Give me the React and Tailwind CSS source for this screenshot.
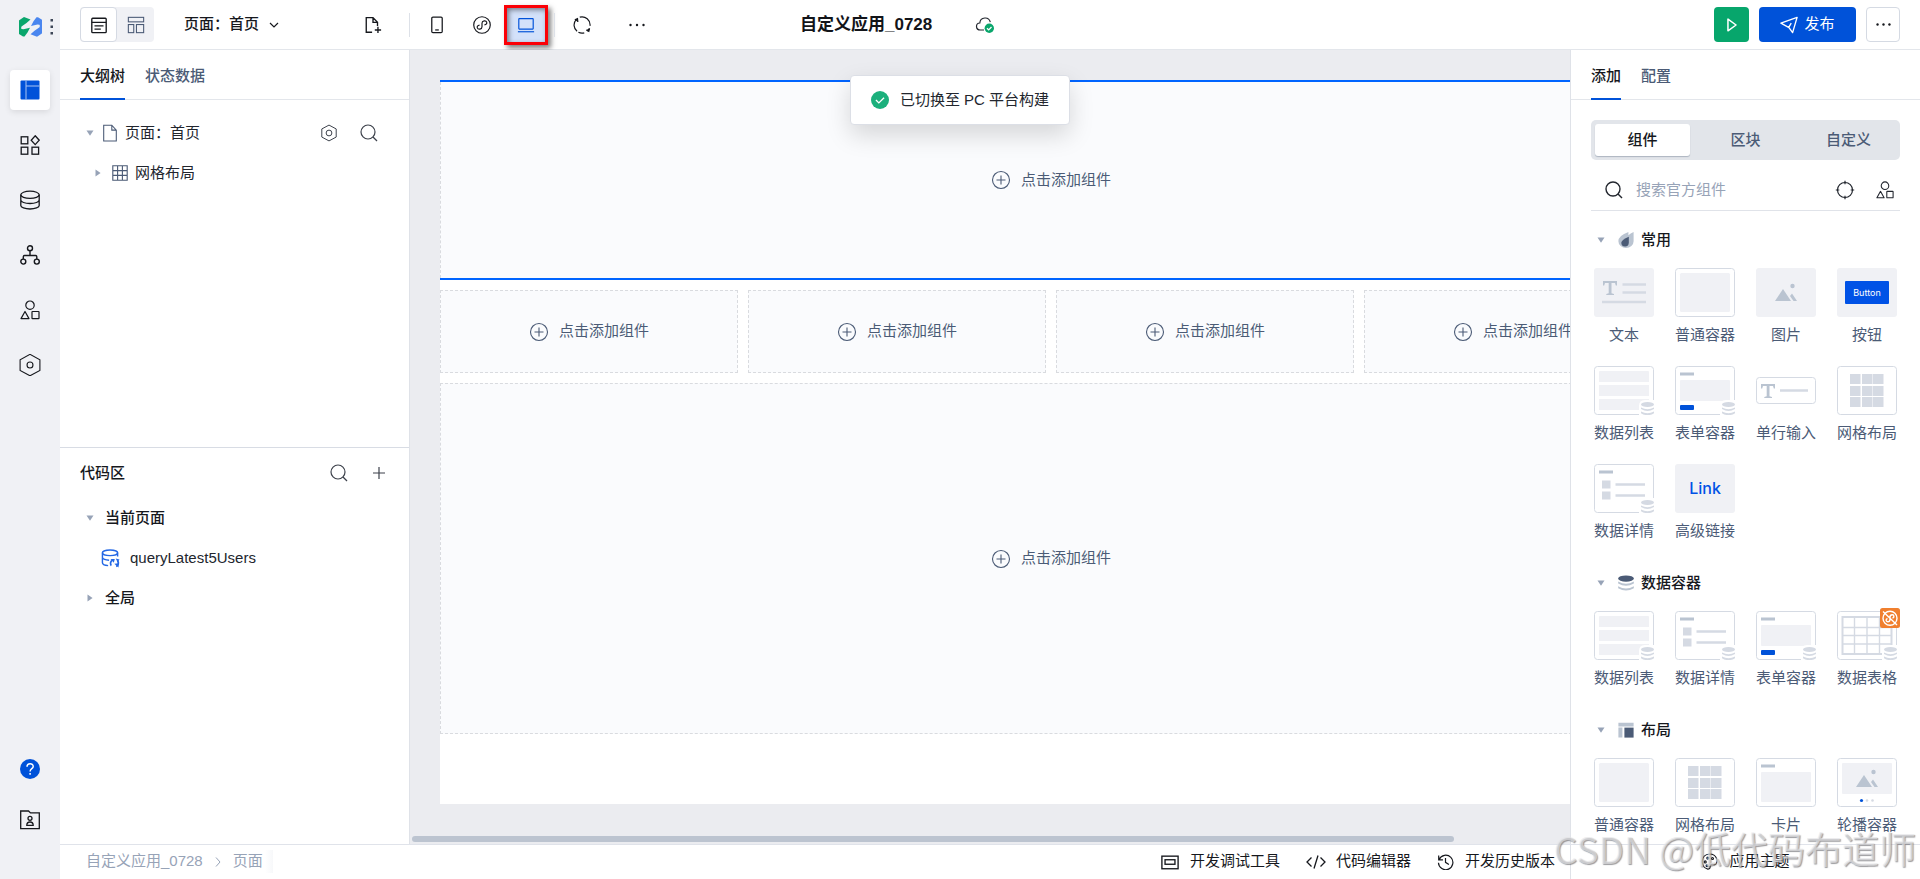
import React from 'react';

function Icon({ size = 'size-5', sw = 1.2, children, className = '' }) {
  return (
    <svg viewBox="0 0 20 20" className={`${size} shrink-0 ${className}`} fill="none" stroke="currentColor" strokeWidth={sw} aria-hidden="true">
      {children}
    </svg>
  );
}

const SearchIcon = ({ sw = 1.2 }) => (
  <Icon sw={sw}>
    <circle cx="9" cy="9" r="7" />
    <path d="M14 14l4 4" />
  </Icon>
);

const PlusCircle = () => (
  <Icon sw={1.1}>
    <circle cx="10" cy="10" r="8.5" />
    <path d="M10 5.5v9M5.5 10h9" />
  </Icon>
);

const Dots = () => (
  <Icon>
    <g fill="currentColor" stroke="none">
      <circle cx="3.5" cy="10" r="1.2" />
      <circle cx="10" cy="10" r="1.2" />
      <circle cx="16.5" cy="10" r="1.2" />
    </g>
  </Icon>
);

const ShapesIcon = ({ size }) => (
  <Icon size={size}>
    <circle cx="10" cy="5.2" r="4.2" />
    <path d="M5 11.5L1 18.6h8z" strokeLinejoin="round" />
    <rect x="12" y="11.5" width="7" height="7.2" rx=".5" />
  </Icon>
);

const DownCaret = () => (
  <svg viewBox="0 0 8 6" className="h-[6px] w-2 shrink-0" aria-hidden="true">
    <path d="M.5 .5h7L4 5.8z" fill="#97a3b7" />
  </svg>
);
const RightCaret = () => (
  <svg viewBox="0 0 6 8" className="mx-px h-2 w-[6px] shrink-0" aria-hidden="true">
    <path d="M.5 .5v7L5.6 4z" fill="#97a3b7" />
  </svg>
);

const HexIcon = ({ size }) => (
  <Icon size={size} sw={1.1}>
    <path d="M10 1.2l8 4.3v9l-8 4.3-8-4.3v-9z" />
    <circle cx="10" cy="10" r="3.2" />
  </Icon>
);

const SIDE = [
  ['组件', <Icon key="a" sw={1.3}><rect x="1.2" y="1.8" width="6.6" height="7" /><rect x="1.2" y="12.2" width="6.6" height="7" /><rect x="12" y="12.2" width="6.6" height="7" /><path d="M15.2 .8l4 4.4-4 4.4-4-4.4z" /></Icon>],
  ['数据', <Icon key="b" sw={1.3}><ellipse cx="10" cy="4.8" rx="9.2" ry="3.6" /><path d="M.8 4.8v10.6c0 2 4.100 3.600 9.200 3.600s9.200-1.600 9.200-3.600V4.800M.8 10c0 2 4.100 3.500 9.200 3.500s9.200-1.500 9.200-3.500" /></Icon>],
  ['流程', <Icon key="c" sw={1.4}><circle cx="10" cy="3.200" r="2.500" /><circle cx="3.300" cy="16.600" r="2.500" /><circle cx="16.800" cy="16.600" r="2.500" /><path d="M10 5.700v4.800M3.300 14v-2.200q0-1.300 1.300-1.300h10.900q1.300 0 1.300 1.300V14" /></Icon>],
  ['素材', <ShapesIcon key="d" />],
  ['设置', <Icon key="e" size="size-[22px]" sw={1}><path d="M10 .3l9 4.900v9.800l-9 4.800-9-4.800V5.200z" /><circle cx="10" cy="10" r="2.700" /></Icon>],
];

function Sidebar() {
  return (
    <nav className="flex w-[60px] shrink-0 flex-col items-center bg-[#f0f1f5] text-[#16181d]">
      <div className="flex h-[54px] items-center pl-[14px]">
        <svg viewBox="0 0 36 20" className="h-5 w-9" aria-label="logo" role="img">
          <path d="M.5 3L5 0l6.500 2.500L7.500 6 2.500 9.500q-.8 1.500 0 2.500l2 .3 6.500-1.500L8.500 15.500 5.500 19.500H4L0 17V3.500z" fill="#0aa66c" />
          <path d="M22.500 16.800L18 19.800l-6.500-2.500 4-3.500 5-3.500q.8-1.500 0-2.500l-2-.3L12 9l2.500-4.700L17.500.3H19L23 2.800v13.500z" fill="#4a86ef" />
          <g fill="#3d4757"><rect x="31.500" y="2" width="2.500" height="2.500" /><rect x="31.500" y="8.500" width="2.500" height="2.500" /><rect x="31.500" y="15" width="2.500" height="2.500" /></g>
        </svg>
      </div>
      <div className="flex flex-col gap-[15px] pt-4">
        <button aria-label="页面" className="grid size-10 place-items-center rounded bg-white shadow-[0_2px_6px_rgba(0,0,0,0.1)]">
          <svg viewBox="0 0 20 20" className="size-5" aria-hidden="true">
            <rect x=".5" y=".5" width="19" height="19" rx="1" fill="#0052d9" />
            <path d="M6 .5v19M6 6h13.500" stroke="#a9c4f3" />
          </svg>
        </button>
        {SIDE.map(([label, icon]) => (
          <button key={label} aria-label={label} className="grid size-10 place-items-center">{icon}</button>
        ))}
      </div>
      <div className="mt-auto flex flex-col gap-[11px] pb-[39px]">
        <button aria-label="帮助" className="grid size-10 place-items-center">
          <Icon sw={1.5}>
            <circle cx="10" cy="10" r="10" fill="#0052d9" stroke="none" />
            <path d="M7 7.800c0-4 6.200-4 6.200-.4 0 2.200-3.100 2.400-3.100 5M10.100 14v1.800" stroke="#fff" />
          </Icon>
        </button>
        <button aria-label="资源" className="grid size-10 place-items-center">
          <Icon sw={1.3}>
            <path d="M.7 1h7.800l2 1.900h8.800v15.800H.7z" />
            <circle cx="10" cy="8.300" r="2" />
            <path d="M6.800 15.300c0-4.400 6.400-4.400 6.400 0z" />
          </Icon>
        </button>
      </div>
    </nav>
  );
}

function Header() {
  return (
    <header className="flex h-[50px] shrink-0 items-center border-b border-[#e3e6eb] bg-white pl-5 pr-5">
      <div className="flex h-[35px] rounded bg-[#f0f1f5]">
        <button aria-label="大纲视图" className="grid w-[37px] place-items-center rounded border border-[#d5dae3] bg-white">
          <Icon size="size-[18px]" sw={1.500}><rect x="2" y="2.500" width="16" height="16" rx="1" /><path d="M2 7h16M5 11h10M5 14.500h7" /></Icon>
        </button>
        <button aria-label="布局视图" className="grid w-[37px] place-items-center text-[#4b5b76]">
          <Icon size="size-[18px]" sw={1.200}><rect x="1.500" y="1.500" width="17" height="5" /><rect x="1.500" y="9.500" width="6" height="9" /><rect x="10.500" y="9.500" width="8" height="9" /></Icon>
        </button>
      </div>
      <button className="ml-[30px] flex w-[180px] items-center gap-[10px] text-[15px] font-medium">
        页面：首页
        <Icon size="size-[10px]" sw={2.400}><path d="M2 6l8 8 8-8" /></Icon>
      </button>
      <button aria-label="新建页面" className="grid h-9 w-[18px] place-items-center">
        <Icon size="size-[18px]" sw={1.500}>
          <path d="M9 18H2.500V1.800H10l5 5.200v4M10 1.800V7h5M15.500 12v7M12 15.500h7" />
        </Icon>
      </button>
      <span className="ml-[27px] h-6 w-px bg-[#dde1e8]" />
      <button aria-label="移动端" className="ml-[17px] grid size-5 place-items-center">
        <Icon size="size-[18px]" sw={1.400}><rect x="4.200" y="1.200" width="11.600" height="17.400" rx="1.300" /><path d="M8 15.500h4" /></Icon>
      </button>
      <button aria-label="小程序" className="ml-[25px] grid size-5 place-items-center">
        <Icon size="size-[18px]" sw={1.300}>
          <circle cx="10" cy="10" r="9.200" />
          <path d="M7.300 10.200c-2.200.3-3 1.700-2.500 3 .7 2.100 5.200 2 5.200-1.200V8c0-3.200 4.500-3.300 5.200-1.200.5 1.300-.3 2.700-2.500 3" />
        </Icon>
      </button>
      <button aria-label="PC 端" className="ml-3 grid h-10 w-11 place-items-center border-3 border-[#fb0006] bg-[#d3e1fa] text-[#0052d9] shadow-[3px_3px_5px_rgba(0,0,0,0.5),inset_2px_2px_5px_rgba(0,0,0,0.45)]">
        <Icon size="size-[18px]" sw={1.300}><rect x="2" y="3" width="16" height="11.500" rx=".5" /><path d="M1 17.500h18" /></Icon>
      </button>
      <span className="ml-[6px] h-6 w-px bg-[#dde1e8]" />
      <button aria-label="刷新" className="ml-[17px] grid size-5 place-items-center">
        <Icon size="size-[18px]" sw={1.300}>
          <path d="M4.500 17A9 9 0 0 1 3.500 4M7.500 1.300A9 9 0 0 1 18.900 11M12.500 18.700A9 9 0 0 1 6 18.100M18 14A9 9 0 0 1 16 16.700" />
          <path d="M2 4.200l3-1.200.4 3.600M18.400 13.800l-.8 3.300-2.800-1.600" fill="currentColor" />
        </Icon>
      </button>
      <button aria-label="更多" className="ml-[35px]"><Dots /></button>
      <h1 className="ml-[153px] text-[17px] font-bold text-[#121419]">自定义应用_0728</h1>
      <svg viewBox="0 0 20 18" className="ml-[43px] h-[18px] w-5" fill="none" aria-label="已保存" role="img">
        <path d="M9 14H5.500C.3 14 .3 7.300 4.800 7 5.300.8 14 .2 15.300 6.200" stroke="#22262e" strokeWidth="1.200" />
        <circle cx="14.300" cy="12.300" r="4.700" fill="#0aa66c" />
        <path d="M12 12.300l1.700 1.600 2.800-2.900" stroke="#fff" strokeWidth="1.300" />
      </svg>
      <div className="ml-auto flex h-[35px] gap-[10px]">
        <button aria-label="运行" className="grid w-[35px] place-items-center rounded bg-[#07a66c] text-white">
          <Icon size="size-[18px]" sw={1.700}><path d="M5.500 3.500v13l9-6.500z" strokeLinejoin="round" /></Icon>
        </button>
        <button className="flex w-[97px] items-center justify-center gap-[6px] rounded bg-[#0052d9] text-[15px] text-white">
          <Icon size="size-[18px]" sw={1.500}><path d="M1 8l18-6.500-5 17-4-5.500zM9.500 13l3-5" strokeLinejoin="round" /></Icon>
          发布
        </button>
        <button aria-label="更多操作" className="grid w-[34px] place-items-center rounded border border-[#d5dae3]"><Icon size="size-[17px]"><g fill="currentColor" stroke="none"><circle cx="3" cy="10" r="1.400" /><circle cx="10" cy="10" r="1.400" /><circle cx="17" cy="10" r="1.400" /></g></Icon></button>
      </div>
    </header>
  );
}

function Tabs({ items }) {
  return (
    <div className="flex h-[50px] shrink-0 gap-5 border-b border-[#e3e6eb] pl-5 text-[15px] font-medium">
      {items.map((t, i) => (
        <button key={t} className={i === 0 ? '-mb-px border-b-2 border-[#0052d9] pt-1 text-[#16181d]' : '-mb-px border-b-2 border-transparent pt-1 text-[#4b5b76]'}>{t}</button>
      ))}
    </div>
  );
}

function LeftPanel() {
  return (
    <aside className="flex w-[350px] shrink-0 flex-col border-r border-[#dfe2e8] bg-white text-[15px] text-[#22262e]">
      <Tabs items={['大纲树', '状态数据']} />
      <div className="flex h-[347px] flex-col pt-[13px]">
        <div className="flex h-10 items-center pl-[26px] pr-[30px]">
          <DownCaret />
          <Icon size="size-[18px]" className="ml-[7px] text-[#4b5b76]"><path d="M3 1.300h9l5 5.500v12H3zM12 1.300v5.500h5" /></Icon>
          <span className="ml-[6px]">页面：首页</span>
          <button aria-label="页面设置" className="ml-auto grid size-5 place-items-center text-[#3c414b]"><HexIcon size="size-[18px]" /></button>
          <button aria-label="搜索大纲" className="ml-5 text-[#3c414b]"><SearchIcon /></button>
        </div>
        <div className="flex h-10 items-center pl-[34px]">
          <RightCaret />
          <Icon size="size-4" sw={1.400} className="ml-[10px] text-[#4b5b76]"><path d="M1 1h18v18H1zM7 1v18M13 1v18M1 7h18M1 13h18" /></Icon>
          <span className="ml-[7px]">网格布局</span>
        </div>
      </div>
      <section className="border-t border-[#d8dce4]">
        <div className="flex h-[50px] items-center pl-5 pr-5">
          <h2 className="font-medium text-[#16181d]">代码区</h2>
          <button aria-label="搜索代码" className="ml-auto text-[#3c414b]"><SearchIcon /></button>
          <button aria-label="新增代码" className="ml-5 text-[#3c414b]"><Icon><path d="M10 4v12M4 10h12" /></Icon></button>
        </div>
        <div className="flex h-10 items-center gap-[11px] pl-[26px] font-medium text-[#16181d]"><DownCaret />当前页面</div>
        <div className="flex h-10 items-center gap-[10px] pl-[41px]">
          <Icon size="size-[19px]" sw={1.500} className="text-[#2468e5]">
            <ellipse cx="9.500" cy="4" rx="8" ry="3" />
            <path d="M1.500 4v10.500q0 2.500 6 3M17.500 4v4M1.500 9q1 2.600 7 2.800" />
            <path d="M10.800 17.500a4 4 0 0 1 1.500-6M17.500 12.500a4 4 0 0 1-1.500 6" strokeWidth="1.800" />
            <path d="M10 10.500h4.500l-1 4zM14 15.500l4.500-.5v4.500zM15.500 10l4 1-2 3z" fill="currentColor" stroke="none" />
          </Icon>
          <span>queryLatest5Users</span>
        </div>
        <div className="flex h-10 items-center gap-[11px] pl-[26px] font-medium text-[#16181d]"><RightCaret />全局</div>
      </section>
    </aside>
  );
}

const AddSlot = ({ className }) => (
  <button className={`flex items-center justify-center gap-[10px] border-dashed border-[#d9dbdf] bg-[#fafbfd] text-[15px] text-[#4b5b76] ${className}`}>
    <PlusCircle />
    点击添加组件
  </button>
);

function Canvas() {
  return (
    <main className="flex min-w-0 flex-1 flex-col bg-[#ebecf0]">
      <div className="flex min-h-0 flex-1 overflow-hidden pb-8 pl-[30px] pt-[30px]">
        <div className="flex w-[1222px] shrink-0 flex-col gap-[10px] bg-white pb-[70px]">
          <div className="flex h-[200px] shrink-0 flex-col border-y-2 border-[#0064ff]">
            <AddSlot className="flex-1 border-x" />
          </div>
          <div className="grid h-[83px] shrink-0 grid-cols-4 gap-[10px]">
            {[0, 1, 2, 3].map((n) => <AddSlot key={n} className="border" />)}
          </div>
          <AddSlot className="min-h-[120px] flex-1 border" />
        </div>
      </div>
      <div className="h-2 shrink-0 pl-[2px]">
        <div className="h-[6px] w-[90%] rounded-full bg-[#bcc4d0]" />
      </div>
    </main>
  );
}

const LINE = '#d5dae3';
const SOFT = '#f0f1f5';
const MID = '#bac4d1';

const Frame = () => <rect x=".5" y=".5" width="59" height="48" rx="3" fill="#fff" stroke={LINE} />;
const Stack = () => (
  <g>
    <path d="M45 50V40q0-6 6-6h9v16z" fill="#fff" />
    <ellipse cx="53.500" cy="38.500" rx="6.500" ry="2.500" fill={LINE} />
    <path d="M47 41.500q6.500 3.500 13 0v1.500q-6.500 4-13 0zM47 45.500q6.500 3.500 13 0v1.700q-6.500 4-13 0z" fill={LINE} />
  </g>
);
const Mountain = ({ x = 0, y = 0 }) => (
  <g transform={`translate(${x} ${y})`} fill={MID}>
    <path d="M19 33l8-12 8 12z" />
    <path d="M34 28l2-2.500L41 33h-3.500z" />
    <circle cx="36.500" cy="18" r="2.200" />
  </g>
);
const Grid9 = () => (
  <g fill={LINE}>
    {[13, 25, 36].map((x) => [8, 20, 31].map((y) => <rect key={`${x}-${y}`} x={x} y={y} width="10.500" height="10" />))}
  </g>
);
const SerifT = ({ x, y }) => (
  <path transform={`translate(${x} ${y})`} d="M0 0h14v4.500h-1.200l-.8-2.500H8.500v10.300l2.500.7v1H3.300v-1l2.400-.7V2H2L1.200 4.500H0z" fill={MID} />
);

const THUMBS = {
  text: <><rect width="60" height="49" rx="3" fill={SOFT} /><SerifT x={9} y={13} /><path d="M28.500 16.500h23.500M28.500 24.500h23.500M8 34h44" stroke={LINE} strokeWidth="2.500" /></>,
  box: <><Frame /><rect x="5" y="5" width="50" height="39" rx="1.500" fill={SOFT} /></>,
  image: <><rect width="60" height="49" rx="3" fill={SOFT} /><Mountain /></>,
  button: <><rect width="60" height="49" rx="3" fill={SOFT} /><rect x="8" y="13" width="44" height="23" rx="1" fill="#0052e6" /><text x="30" y="28" textAnchor="middle" fill="#fff" className="font-['Inter',sans-serif] text-[9px]">Button</text></>,
  list: <><Frame /><path d="M6 5h48q1 0 1 1v10H5V6q0-1 1-1zM5 19h50v11H5zM5 33h50v11H5z" fill={SOFT} /><Stack /></>,
  form: <><Frame /><rect x="5" y="6.500" width="14" height="3" fill={MID} /><rect x="5" y="14" width="50" height="21" rx="1" fill={SOFT} /><rect x="5" y="39" width="14" height="5" rx="1" fill="#0052d9" /><Stack /></>,
  input: <><rect x=".5" y="11.500" width="59" height="26" rx="3" fill="#fff" stroke={LINE} /><SerifT x={5} y={18} /><path d="M24 24.500h28" stroke={LINE} strokeWidth="2.500" /></>,
  grid: <><Frame /><Grid9 /></>,
  detail: <><Frame /><rect x="5" y="6.500" width="14" height="3" fill={MID} /><path d="M8 16.500h8.500v8H8zM8 27.500h8.500v8H8z" fill={LINE} /><path d="M21.500 20.500h29.500M21.500 31.500h29.500" stroke={LINE} strokeWidth="2.500" /><Stack /></>,
  link: <><rect width="60" height="49" rx="3" fill={SOFT} /><text x="30" y="30" textAnchor="middle" fill="#0052e6" className="font-['Inter',sans-serif] text-[16px] font-medium">Link</text></>,
  table: <><Frame /><path d="M5.500 6h49v37h-49z" fill="#fff" stroke={LINE} strokeWidth="2" /><path d="M5.500 16.500h49M5.500 24.500h49M5.500 33h49M17.500 6v37M30 6v37M42.500 6v37" stroke={LINE} strokeWidth="1.400" /><Stack /></>,
  card: <><Frame /><rect x="5" y="6.500" width="14" height="3" fill={MID} /><rect x="5" y="14" width="50" height="30" rx="1" fill={SOFT} /></>,
  carousel: <><Frame /><rect x="5" y="5" width="50" height="31" rx="1" fill={SOFT} /><Mountain y={-4} /><circle cx="24.500" cy="42.500" r="1.600" fill="#0052d9" /><circle cx="30" cy="42.500" r="1.300" fill={LINE} /><circle cx="35.500" cy="42.500" r="1.300" fill={LINE} /></>,
};

const SECTIONS = [
  {
    title: '常用',
    icon: <><path d="M19.500 0v11.500a9.500 8.500 0 0 1-19 0Q.5 4.500 13 0v4Q15.500 1.500 19.500 0z" fill={MID} /><path d="M13.500 6v7.500a4.700 4.500 0 0 1-9.400 0Q4.500 9.500 13.500 6z" fill="#4b5b76" /></>,
    items: [['文本', 'text'], ['普通容器', 'box'], ['图片', 'image'], ['按钮', 'button'], ['数据列表', 'list'], ['表单容器', 'form'], ['单行输入', 'input'], ['网格布局', 'grid'], ['数据详情', 'detail'], ['高级链接', 'link']],
  },
  {
    title: '数据容器',
    icon: <><ellipse cx="10" cy="4.500" rx="9.800" ry="4" fill="#4b5b76" /><path d="M.2 8q9.800 6 19.600 0v2.500q-9.800 6-19.600 0zM.2 14q9.800 6 19.600 0v2.500q-9.800 6-19.600 0z" fill={MID} /></>,
    items: [['数据列表', 'list'], ['数据详情', 'detail'], ['表单容器', 'form'], ['数据表格', 'table', true]],
  },
  {
    title: '布局',
    icon: <><path d="M.5 1h19v4.500H.5zM.5 7h5v12.500h-5z" fill={MID} /><path d="M8 7h11.500v12.500H8z" fill="#4b5b76" /></>,
    items: [['普通容器', 'box'], ['网格布局', 'grid'], ['卡片', 'card'], ['轮播容器', 'carousel']],
  },
];

function Tile({ label, kind, flagged }) {
  return (
    <button className="relative flex w-[60px] flex-col items-center gap-2">
      <svg viewBox="0 0 60 49" className="h-[49px] w-[60px]" fill="none" aria-hidden="true">{THUMBS[kind]}</svg>
      {flagged && (
        <svg viewBox="0 0 20 20" className="absolute -right-[3px] -top-[3px] size-5" fill="none" stroke="#fff" strokeWidth="1.400" aria-hidden="true">
          <rect width="20" height="20" rx="2.500" fill="#f07f2e" stroke="none" />
          <circle cx="10" cy="10.300" r="7" />
          <path d="M7.500 10.500c-2 .5-1.800 3.200.2 3.200 1.300 0 2.300-.7 2.300-2.200V9c0-1.500 1-2.200 2.300-2.200 2 0 2.200 2.700.2 3.200M3 3.500l14 13.500" />
        </svg>
      )}
      <span className="h-5 whitespace-nowrap text-[15px] leading-5 text-[#4b5b76]">{label}</span>
    </button>
  );
}

function RightPanel() {
  return (
    <aside className="flex w-[350px] shrink-0 flex-col border-l border-[#dfe2e8] bg-white text-[15px]">
      <Tabs items={['添加', '配置']} />
      <div className="mx-5 mt-5 grid h-10 shrink-0 grid-cols-[95px_1fr_95px] rounded-[5px] bg-[#e2e5ea] p-1 font-medium text-[#4b5b76]">
        <button className="rounded-[3px] bg-white text-[#16181d] shadow-[0_1px_1px_rgba(75,91,118,0.35)]">组件</button>
        <button>区块</button>
        <button>自定义</button>
      </div>
      <div className="mx-5 mt-[10px] flex h-[41px] shrink-0 items-center border-b border-[#e0e3e9] pl-[13px] pr-[6px] text-[#22262e]">
        <SearchIcon sw={1.400} />
        <input aria-label="搜索官方组件" placeholder="搜索官方组件" className="ml-3 min-w-0 flex-1 outline-none placeholder:text-[#97a3b7]" />
        <button aria-label="定位"><Icon sw={1.200}><circle cx="10" cy="10" r="7.500" /><path d="M10 .8v3.500M10 15.700v3.500M.8 10h3.500M15.700 10h3.500" /></Icon></button>
        <button aria-label="素材" className="ml-[21px]"><ShapesIcon size="size-[18px]" /></button>
      </div>
      <div className="flex min-h-0 flex-1 flex-col gap-[22px] overflow-hidden pl-[23px] pr-[23px] pt-[9px]">
        {SECTIONS.map((s) => (
          <section key={s.title} className="shrink-0">
            <h3 className="flex h-10 items-center pl-[3px] font-medium text-[#16181d]">
              <DownCaret />
              <svg viewBox="0 0 20 20" className="ml-[13px] mr-[7px] size-4" aria-hidden="true">{s.icon}</svg>
              {s.title}
            </h3>
            <div className="mt-2 grid grid-cols-4 justify-items-start gap-x-[21px] gap-y-[21px]">
              {s.items.map(([label, kind, flagged]) => <Tile key={label} label={label} kind={kind} flagged={flagged} />)}
            </div>
          </section>
        ))}
      </div>
    </aside>
  );
}

function Footer() {
  return (
    <footer className="flex h-[35px] shrink-0 border-t border-[#e0e3ea] bg-white text-[15px] text-[#16181d]">
      <div className="flex min-w-0 flex-1 items-center justify-between pb-px pl-[26px] pr-[15px]">
        <div className="flex items-center gap-[10px] text-[#97a3b7]">
          <a href="#app">自定义应用_0728</a>
          <Icon size="size-[10px]" sw={2}><path d="M6 1l8 9-8 9" /></Icon>
          <a href="#page" className="bg-linear-to-r from-white from-80% to-[#f7f8fa] pr-[10px]">页面</a>
        </div>
        <div className="flex items-center gap-[26px]">
          <button className="flex items-center gap-[11px]">
            <Icon size="size-[18px]" sw={1.500}><rect x="1" y="3.500" width="18" height="14" /><rect x="4.500" y="7.500" width="11" height="5" /></Icon>
            开发调试工具
          </button>
          <button className="flex items-center gap-[10px]">
            <Icon sw={1.300}><path d="M5.500 5.500L1 10l4.500 4.500M14.500 5.500L19 10l-4.500 4.500M12 3.500l-4 13" /></Icon>
            代码编辑器
          </button>
          <button className="flex items-center gap-[11px]">
            <Icon size="size-[17px]" sw={1.400}><path d="M2 3v5h5M2.500 7.500a8.500 8.500 0 1 1-.8 4M10 6v5l4 2.500" /></Icon>
            开发历史版本
          </button>
        </div>
      </div>
      <div className="flex w-[350px] items-center justify-center border-l border-[#dfe2e8] pb-px">
        <button className="flex items-center gap-[11px]">
          <Icon size="size-[17px]" sw={1.300}>
            <path d="M8 19C-1.500 16.500-.5 1.500 10 1.200c9 0 11 9.800 6.500 12.300-2 .8-3.500-1-5 .5-1.500 2 .5 5-3.500 5z" />
            <circle cx="5" cy="10.500" r="1.200" /><circle cx="8" cy="6" r="1.200" /><circle cx="13.500" cy="6.500" r="1.200" /><circle cx="7" cy="15" r="1" />
          </Icon>
          应用主题
        </button>
      </div>
    </footer>
  );
}

export default function App() {
  return (
    <div className="relative flex h-screen min-h-[640px] w-full overflow-hidden bg-white font-['Liberation_Sans','Noto_Sans_CJK_SC',sans-serif] text-[#16181d]">
      <Sidebar />
      <div className="flex min-w-0 flex-1 flex-col">
        <Header />
        <div className="flex min-h-0 flex-1">
          <LeftPanel />
          <Canvas />
          <RightPanel />
        </div>
        <Footer />
      </div>
      <div role="status" className="absolute left-1/2 top-[75px] flex h-[50px] w-[220px] -translate-x-1/2 items-center justify-center gap-[11px] rounded border border-[#dcdfe6] bg-white text-[15px] text-[#22262e] shadow-[0_10px_25px_rgba(0,0,0,0.15)]">
        <Icon size="size-[18px]" sw={1.500}>
          <circle cx="10" cy="10" r="10" fill="#1bb07c" stroke="none" />
          <path d="M5.500 10l3.200 3.200L14.500 7.500" stroke="#fff" />
        </Icon>
        已切换至 PC 平台构建
      </div>
      <div className="pointer-events-none absolute bottom-1 right-1 whitespace-nowrap font-['Noto_Sans_CJK_SC',sans-serif] text-[37px] leading-[54px] text-[rgba(232,232,234,0.65)] [text-shadow:1px_1px_1px_rgba(90,90,95,0.6)]">
        CSDN @低代码布道师
      </div>
    </div>
  );
}
